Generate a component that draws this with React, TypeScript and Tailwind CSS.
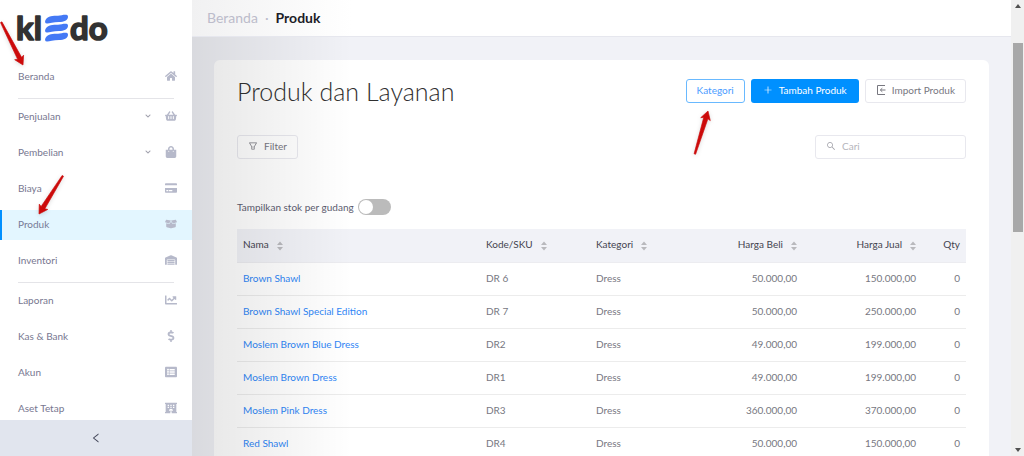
import { useState } from 'react';
import type { ReactNode } from 'react';
import {
  FaHome,
  FaShoppingBasket,
  FaShoppingBag,
  FaCreditCard,
  FaBoxOpen,
  FaWarehouse,
  FaChartLine,
  FaDollarSign,
  FaListAlt,
  FaHotel,
  FaChevronDown,
} from 'react-icons/fa';
import { AiOutlineFilter, AiOutlinePlus, AiOutlineSearch, AiOutlineLeft } from 'react-icons/ai';

type NavItem = { label: string; icon: ReactNode; expandable?: boolean };

const navGroups: NavItem[][] = [
  [{ label: 'Beranda', icon: <FaHome /> }],
  [
    { label: 'Penjualan', icon: <FaShoppingBasket />, expandable: true },
    { label: 'Pembelian', icon: <FaShoppingBag />, expandable: true },
    { label: 'Biaya', icon: <FaCreditCard /> },
    { label: 'Produk', icon: <FaBoxOpen /> },
    { label: 'Inventori', icon: <FaWarehouse /> },
  ],
  [
    { label: 'Laporan', icon: <FaChartLine /> },
    { label: 'Kas & Bank', icon: <FaDollarSign /> },
    { label: 'Akun', icon: <FaListAlt /> },
    { label: 'Aset Tetap', icon: <FaHotel /> },
  ],
];

const products = [
  { name: 'Brown Shawl', sku: 'DR 6', category: 'Dress', buy: '50.000,00', sell: '150.000,00', qty: 0 },
  { name: 'Brown Shawl Special Edition', sku: 'DR 7', category: 'Dress', buy: '50.000,00', sell: '250.000,00', qty: 0 },
  { name: 'Moslem Brown Blue Dress', sku: 'DR2', category: 'Dress', buy: '49.000,00', sell: '199.000,00', qty: 0 },
  { name: 'Moslem Brown Dress', sku: 'DR1', category: 'Dress', buy: '49.000,00', sell: '199.000,00', qty: 0 },
  { name: 'Moslem Pink Dress', sku: 'DR3', category: 'Dress', buy: '360.000,00', sell: '370.000,00', qty: 0 },
  { name: 'Red Shawl', sku: 'DR4', category: 'Dress', buy: '50.000,00', sell: '150.000,00', qty: 0 },
];

const logoStroke = 'M0.5 5 C3 0.6 8 1 13 0.8 C17 0.5 22.500 -1.500 23 1.500 C23 5.500 19 7 14 7 C8 7 4 8.800 2 8.600 C-0.200 8.400 -0.300 6.500 0.500 5Z';

function Logo() {
  return (
    <svg viewBox="0 0 100 48" className="h-12 w-[100px]" role="img" aria-label="kledo">
      <g fill="#323232" stroke="#323232" strokeWidth="1.6" strokeLinejoin="round" fontFamily="Lato, sans-serif" fontWeight="700" fontSize="33">
        <text x="4" y="34">kl</text>
        <text x="58" y="34">do</text>
      </g>
      <g fill="#4479f5">
        <path d={logoStroke} transform="translate(33 9)" />
        <path d={logoStroke} transform="translate(33 18)" />
        <path d={logoStroke} transform="translate(33 27)" />
      </g>
    </svg>
  );
}

function ImportIcon() {
  return (
    <svg viewBox="0 0 10 10" className="size-2.5" fill="none" stroke="currentColor">
      <path d="M9 0.500 H1.500 V9.500 H9 M9.500 5 H4.500 M6.300 3.200 L4.300 5 L6.300 6.800" />
    </svg>
  );
}

function Sidebar() {
  return (
    <aside className="flex w-48 shrink-0 flex-col bg-white">
      <a href="#" className="ml-3 mt-1.5 block shrink-0">
        <Logo />
      </a>
      <nav className="mt-2 min-h-0 flex-1 overflow-hidden">
        {navGroups.map((group, i) => (
          <ul
            key={i}
            className="flex flex-col gap-1.5 before:mx-[18px] before:mb-[-3px] before:h-px before:bg-[#e4e4e8] first:before:hidden not-first:mt-1.5"
          >
            {group.map(item => (
              <li key={item.label}>
                <a
                  href="#"
                  className={
                    item.label === 'Produk'
                      ? 'flex h-[30px] items-center border-l-2 border-[#0090ff] bg-[#e3f6ff] pb-0.5 pl-4 pr-[15px] text-[#777a96]'
                      : 'flex h-[30px] items-center pb-0.5 pl-[18px] pr-[15px] text-[#777790]'
                  }
                >
                  <span className="flex-1">{item.label}</span>
                  {item.expandable && <FaChevronDown className="mr-3.5 size-1.5 text-[#a0a0ac]" />}
                  <span className="text-[12px] text-[#b6b9ca]">{item.icon}</span>
                </a>
              </li>
            ))}
          </ul>
        ))}
      </nav>
      <button type="button" aria-label="Collapse menu" className="flex h-9 shrink-0 items-center justify-center bg-[#e1e5ee] text-[#44475a]">
        <AiOutlineLeft className="size-3" />
      </button>
    </aside>
  );
}

function HeaderCell({ label, right, sortable = true }: { label: string; right?: boolean; sortable?: boolean }) {
  return (
    <th className="px-1.5 pb-0.5 font-normal">
      <span className={right ? 'flex items-center justify-end gap-2' : 'flex items-center gap-2'}>
        {label}
        {sortable && (
          <svg viewBox="0 0 6 10" className="mt-1 h-2.5 w-1.5" fill="#b9b9bd">
            <path d="M0 4 L3 0.500 L6 4Z M0 6 L3 9.500 L6 6Z" />
          </svg>
        )}
      </span>
    </th>
  );
}

function ProductTable() {
  return (
    <table className="mt-3.5 w-full table-fixed border-collapse text-left">
      <colgroup>
        <col />
        <col className="w-[110px]" />
        <col className="w-[110px]" />
        <col className="w-[103px]" />
        <col className="w-[119px]" />
        <col className="w-11" />
      </colgroup>
      <thead>
        <tr className="h-[33px] border-b border-[#ececf0] bg-[#f1f2f7] text-[#44444f]">
          <HeaderCell label="Nama" />
          <HeaderCell label="Kode/SKU" />
          <HeaderCell label="Kategori" />
          <HeaderCell label="Harga Beli" right />
          <HeaderCell label="Harga Jual" right />
          <HeaderCell label="Qty" right sortable={false} />
        </tr>
      </thead>
      <tbody>
        {products.map(p => (
          <tr key={p.name} className="h-[33px] border-b border-[#ececec]">
            <td className="px-1.5 pb-0.5">
              <a href="#" className="text-[#2f86f6]">{p.name}</a>
            </td>
            <td className="px-1.5 pb-0.5">{p.sku}</td>
            <td className="px-1.5 pb-0.5">{p.category}</td>
            <td className="px-1.5 pb-0.5 text-right">{p.buy}</td>
            <td className="px-1.5 pb-0.5 text-right">{p.sell}</td>
            <td className="px-1.5 pb-0.5 text-right">{p.qty}</td>
          </tr>
        ))}
      </tbody>
    </table>
  );
}

function Scrollbar() {
  return (
    <div className="flex w-[13px] shrink-0 flex-col items-center bg-[#f0f0f0] py-1" aria-hidden="true">
      <svg viewBox="0 0 6 4" className="h-1 w-1.5" fill="#505050">
        <path d="M0 4 L3 0 L6 4Z" />
      </svg>
      <div className="mt-[35px] h-[189px] w-2.5 bg-[#a8a8a8]" />
      <svg viewBox="0 0 6 4" className="mt-auto h-1 w-1.5" fill="#505050">
        <path d="M0 0 L3 4 L6 0Z" />
      </svg>
    </div>
  );
}

function Arrow({ x, y, length, angle }: { x: number; y: number; length: number; angle: number }) {
  return (
    <g transform={`translate(${x} ${y}) rotate(${angle})`}>
      <path d={`M0 0 L-8.500 -5 L-7.500 -2.200 L${-length} -0.800 L${-length} 0.800 L-7.500 2.200 L-8.500 5Z`} />
    </g>
  );
}

export default function App() {
  const [perWarehouse, setPerWarehouse] = useState(false);
  const [query, setQuery] = useState('');

  return (
    <div className="relative flex h-screen overflow-hidden bg-[#f1f2f7] font-['Lato',sans-serif] text-[10px] leading-4 text-[#77777f]">
      <Sidebar />
      <div className="relative min-w-0 flex-1 overflow-hidden">
        <header className="relative z-10 flex h-[37px] items-center gap-[7px] border-b border-[#e6e7ee] bg-linear-to-r from-[#f1f1f2] to-white to-[160px] px-[15px] text-[14px]">
          <a href="#" className="text-[#bcbccb]">Beranda</a>
          <span className="text-[#bcbccb]">·</span>
          <span className="font-bold text-[#1c1c28]">Produk</span>
        </header>
        <main className="mx-[22px] mt-[23px] rounded-md bg-white px-[23px] pt-[17px]">
          <div className="flex items-center gap-1.5">
            <h1 className="flex-1 pb-1 text-[25px] font-light leading-7 text-[#303030]">Produk dan Layanan</h1>
            <button type="button" className="mb-1 h-6 rounded-[3px] border border-[#69b9ff] px-2.5 pb-0.5 text-[#4b9cff]">
              Kategori
            </button>
            <button type="button" className="mb-1 flex h-6 items-center gap-1.5 rounded-[3px] bg-[#0090ff] px-3 pb-0.5 text-white">
              <AiOutlinePlus className="size-2.5" />
              Tambah Produk
            </button>
            <button type="button" className="mb-1 flex h-6 items-center gap-1.5 rounded-[3px] border border-[#e8e8ee] px-2.5 pb-0.5">
              <ImportIcon />
              Import Produk
            </button>
          </div>
          <div className="mt-[26px] flex items-center justify-between">
            <button type="button" className="flex h-6 items-center gap-1.5 rounded-[3px] border border-[#e8e8ee] px-2.5 pb-0.5">
              <AiOutlineFilter className="size-2.5" />
              Filter
            </button>
            <label className="flex h-6 w-[151px] items-center gap-1.5 rounded-[3px] border border-[#e8e8ee] px-2.5 pb-0.5">
              <AiOutlineSearch className="size-2.5 text-[#a0a0a8]" />
              <input
                aria-label="Cari"
                placeholder="Cari"
                value={query}
                onChange={e => setQuery(e.target.value)}
                className="min-w-0 flex-1 outline-none placeholder:text-[#b5b5bc]"
              />
            </label>
          </div>
          <label className="mt-10 flex w-fit items-center gap-1 text-[#5d5d70]">
            Tampilkan stok per gudang
            <input
              type="checkbox"
              role="switch"
              checked={perWarehouse}
              onChange={e => setPerWarehouse(e.target.checked)}
              className="h-4 w-[33px] appearance-none rounded-full bg-[#bbbbbb] p-px before:block before:size-3.5 before:rounded-full before:bg-white checked:bg-[#0090ff] checked:before:ml-auto"
            />
          </label>
          <ProductTable />
        </main>
        <div className="pointer-events-none absolute inset-y-0 left-0 w-40 bg-linear-to-r from-black/10 to-transparent" />
      </div>
      <Scrollbar />
      <svg viewBox="0 0 1024 456" className="pointer-events-none absolute left-0 top-0 z-20 h-[456px] w-[1024px] drop-shadow-sm" fill="#cc0a0a" stroke="#cc0a0a" strokeWidth="0.6" strokeLinejoin="round" aria-hidden="true">
        <Arrow x={23} y={65} length={48} angle={63} />
        <Arrow x={39} y={214} length={45} angle={122} />
        <Arrow x={708} y={111} length={45} angle={-73} />
      </svg>
    </div>
  );
}
